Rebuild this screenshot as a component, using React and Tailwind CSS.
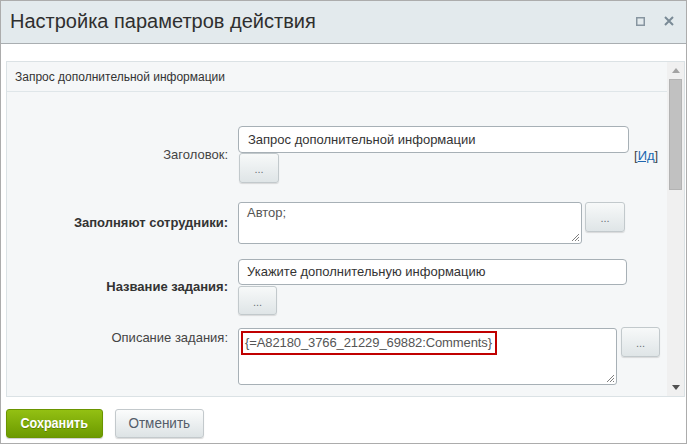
export default function App() {
  const dotsBtn =
    "flex items-center justify-center rounded-[3px] border border-[#c2c9cc] bg-gradient-to-b from-[#f7f9f9] to-[#dfe5e7] shadow-[0_1px_1px_rgba(0,0,0,0.12)] text-[11px] text-[#6a7378] leading-none pt-[3px]";
  const Grip = () => (
    <svg className="absolute right-[1px] bottom-[1px]" width="10" height="10" viewBox="0 0 10 10">
      <path d="M9 2 L2 9 M9 5 L5 9 M9 8 L8 9" stroke="#7f7f7f" strokeWidth="1" />
    </svg>
  );
  return (
    <div className="w-[687px] h-[444px] bg-white border border-[#acacac] flex flex-col overflow-hidden font-['Liberation_Sans',Arial,sans-serif]">
      {/* header */}
      <div className="h-[43px] shrink-0 bg-[#e3eaed] border-b border-[#a9aeb1] flex items-center pl-[9px] pr-[12px]">
        <div className="flex-1 text-[20px] text-[#2f2f2f] leading-none pb-[2px]">
          Настройка параметров действия
        </div>
        <div className="flex items-center gap-[19px] pb-[2px]">
          <svg width="9" height="9" viewBox="0 0 9 9">
            <rect x="0.75" y="0.75" width="7.5" height="7.5" fill="none" stroke="#8795a0" strokeWidth="1.5" />
          </svg>
          <svg width="10" height="10" viewBox="0 0 10 10">
            <path d="M1 1 L9 9 M9 1 L1 9" stroke="#7a8a96" strokeWidth="2" />
          </svg>
        </div>
      </div>

      {/* body */}
      <div className="pt-[17px] pl-[5px]">
        <div className="w-[679px] h-[336px] border border-[#dbe2e5] bg-[#f5f7f8] flex overflow-hidden">
          <div className="flex-1 flex flex-col">
            <div className="h-[30px] shrink-0 border-b border-[#dfe6e9] flex items-center pl-[8px] text-[12px] text-[#333]">
              Запрос дополнительной информации
            </div>

            {/* row 1 */}
            <div className="flex items-center mt-[34px]">
              <div className="w-[221px] text-right text-[13px] text-[#444]">Заголовок:</div>
              <div className="ml-[10px] flex flex-col">
                <div className="w-[391px] h-[27px] bg-white border border-[#a7b0b6] rounded-[4px] flex items-center pl-[9px] text-[13px] text-[#333]">
                  Запрос дополнительной информации
                </div>
                <div className={dotsBtn + " w-[40px] h-[30px] ml-[1px]"}>...</div>
              </div>
              <div className="ml-[5px] mt-[2px] text-[13px] text-[#444]">
                [<span className="text-[#2067b0] underline">Ид</span>]
              </div>
            </div>

            {/* row 2 */}
            <div className="flex items-center mt-[19px]">
              <div className="w-[221px] text-right text-[13px] font-bold text-[#333]">Заполняют сотрудники:</div>
              <div className="ml-[10px] flex items-start">
                <div className="relative w-[344px] h-[42px] bg-white border border-[#a7b0b6] rounded-[3px] pl-[8px] pt-[2px] text-[13px] leading-[15px] text-[#555]">
                  Автор;
                  <Grip />
                </div>
                <div className={dotsBtn + " w-[40px] h-[30px] ml-[3px]"}>...</div>
              </div>
            </div>

            {/* row 3 */}
            <div className="flex items-center mt-[15px]">
              <div className="w-[221px] text-right text-[13px] font-bold text-[#333]">Название задания:</div>
              <div className="ml-[10px] flex flex-col">
                <div className="w-[389px] h-[26px] bg-white border border-[#a7b0b6] rounded-[4px] flex items-center pl-[8px] text-[13px] text-[#333]">
                  Укажите дополнительную информацию
                </div>
                <div className={dotsBtn + " w-[39px] h-[29px] mt-[1px]"}>...</div>
              </div>
            </div>

            {/* row 4 */}
            <div className="flex items-start mt-[13px]">
              <div className="w-[221px] text-right text-[13px] leading-[15px] text-[#444] pt-[2px]">Описание задания:</div>
              <div className="ml-[10px] flex items-start">
                <div className="relative w-[379px] h-[57px] bg-white border border-[#a7b0b6] rounded-[3px] pl-[2px] pt-[1px]">
                  <div className="inline-flex items-center h-[24px] border-2 border-[#c00000] pl-[2px] pr-[3px] text-[13px] tracking-[-0.1px] text-[#555]">
                    {"{=A82180_3766_21229_69882:Comments}"}
                  </div>
                  <Grip />
                </div>
                <div className={dotsBtn + " w-[39px] h-[30px] ml-[4px] -mt-[1px]"}>...</div>
              </div>
            </div>
          </div>

          {/* scrollbar */}
          <div className="w-[17px] shrink-0 bg-[#f0f0f0] flex flex-col">
            <div className="h-[17px] flex items-center justify-center">
              <svg width="8" height="5" viewBox="0 0 8 5">
                <path d="M0 5 L4 0 L8 5 Z" fill="#a3a3a3" />
              </svg>
            </div>
            <div className="w-[13px] h-[111px] mx-auto bg-[#c1c1c1] border border-[#b3b3b3]" />
            <div className="flex-1" />
            <div className="h-[17px] flex items-center justify-center">
              <svg width="8" height="5" viewBox="0 0 8 5">
                <path d="M0 0 L8 0 L4 5 Z" fill="#505050" />
              </svg>
            </div>
          </div>
        </div>
      </div>

      {/* footer */}
      <div className="flex pl-[5px] pt-[12px] gap-[12px]">
        <div className="w-[97px] h-[29px] rounded-[3px] border border-[#6a9400] bg-gradient-to-b from-[#93c013] to-[#6c9a00] flex items-center justify-center text-white font-bold text-[15px] [text-shadow:0_1px_0_rgba(0,0,0,0.25)] shadow-[0_1px_1px_rgba(0,0,0,0.2)]">
          <span className="inline-block scale-x-[0.84]">Сохранить</span>
        </div>
        <div className="w-[89px] h-[29px] rounded-[3px] border border-[#c3c9cc] bg-gradient-to-b from-[#fbfcfc] to-[#dde3e5] flex items-center justify-center text-[#535c69] text-[15px] shadow-[0_1px_1px_rgba(0,0,0,0.15)]">
          <span className="inline-block scale-x-[0.9]">Отменить</span>
        </div>
      </div>
    </div>
  );
}
